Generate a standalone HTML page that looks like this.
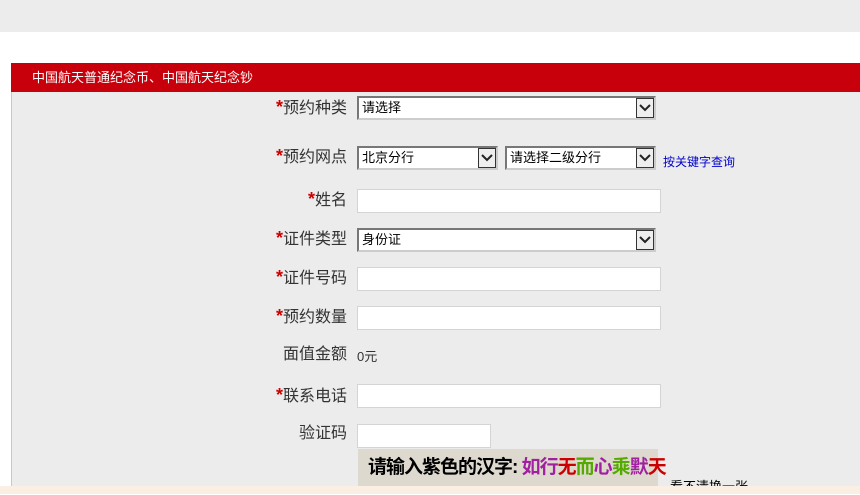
<!DOCTYPE html>
<html><head><meta charset="utf-8"><style>
body{margin:0;width:860px;height:494px;overflow:hidden;background:#fff;font-family:"Liberation Sans","Noto Sans CJK SC",sans-serif;position:relative}
.a{position:absolute}
.lab{position:absolute;right:513px;font-size:16px;color:#333;line-height:20px;white-space:nowrap}
.lab b{color:#c00;font-weight:bold;font-size:18px}
.in{position:absolute;background:#fff;border:1px solid #d4d4d4;box-sizing:border-box;height:24px}
.sel{position:absolute;background:#fff;border:2px solid #777;border-right-color:#ccc;border-bottom-color:#ccc;box-sizing:border-box;height:24px;font-size:13px;line-height:20px;padding-left:3px;color:#000}
.sel i{position:absolute;right:0;top:0;width:18px;height:20px;border:1px solid #333;box-sizing:border-box;background:#eee}
.sel i svg{position:absolute;left:2px;top:4px}
</style></head><body>
<div class="a" style="left:0;top:0;width:860px;height:32px;background:#ececec"></div>
<div class="a" style="left:11px;top:63px;width:849px;height:431px;background:#ececec;border-left:1px solid #c8c8c8"></div>
<div class="a" style="left:11px;top:63px;width:849px;height:29px;background:#c8000b;color:#fff;font-size:13px;line-height:29px;padding-left:21px;box-sizing:border-box">中国航天普通纪念币、中国航天纪念钞</div>

<div class="lab" style="top:97px"><b>*</b>预约种类</div>
<div class="sel" style="left:357px;top:96px;width:299px">请选择<i><svg width="12" height="10"><path d="M1 2 L6 7 L11 2" stroke="#222" stroke-width="2" fill="none"/></svg></i></div>
<div class="lab" style="top:146px"><b>*</b>预约网点</div>
<div class="sel" style="left:357px;top:146px;width:141px">北京分行<i><svg width="12" height="10"><path d="M1 2 L6 7 L11 2" stroke="#222" stroke-width="2" fill="none"/></svg></i></div>
<div class="sel" style="left:505px;top:146px;width:151px">请选择二级分行<i><svg width="12" height="10"><path d="M1 2 L6 7 L11 2" stroke="#222" stroke-width="2" fill="none"/></svg></i></div>
<div class="a" style="left:663px;top:153px;font-size:12px;color:#00c">按关键字查询</div>
<div class="lab" style="top:189px"><b>*</b>姓名</div>
<div class="in" style="left:357px;top:189px;width:304px"></div>
<div class="lab" style="top:228px"><b>*</b>证件类型</div>
<div class="sel" style="left:357px;top:228px;width:299px">身份证<i><svg width="12" height="10"><path d="M1 2 L6 7 L11 2" stroke="#222" stroke-width="2" fill="none"/></svg></i></div>
<div class="lab" style="top:267px"><b>*</b>证件号码</div>
<div class="in" style="left:357px;top:267px;width:304px"></div>
<div class="lab" style="top:306px"><b>*</b>预约数量</div>
<div class="in" style="left:357px;top:306px;width:304px"></div>
<div class="lab" style="top:345px">面值金额</div>
<div class="a" style="left:357px;top:346px;font-size:13px;color:#333">0元</div>
<div class="lab" style="top:385px"><b>*</b>联系电话</div>
<div class="in" style="left:357px;top:384px;width:304px"></div>
<div class="lab" style="top:424px">验证码</div>
<div class="in" style="left:357px;top:424px;width:134px"></div>
<div class="a" style="left:358px;top:449px;width:300px;height:38px;background:#ddd9cf;font-size:19px;line-height:38px;padding-left:10px;box-sizing:border-box;white-space:nowrap;font-weight:bold;letter-spacing:-1px">请输入紫色的汉字: <span style="color:#a020a0">如行</span><span style="color:#c00">无</span><span style="color:#5a0">而</span><span style="color:#a020a0">心</span><span style="color:#5a0">乘</span><span style="color:#a020a0">默</span><span style="color:#c00">天</span></div>
<div class="a" style="left:670px;top:476px;font-size:13px;color:#000">看不清换一张</div>
<div class="a" style="left:0;top:486px;width:860px;height:8px;background:#fbeee2"></div>
</body></html>
